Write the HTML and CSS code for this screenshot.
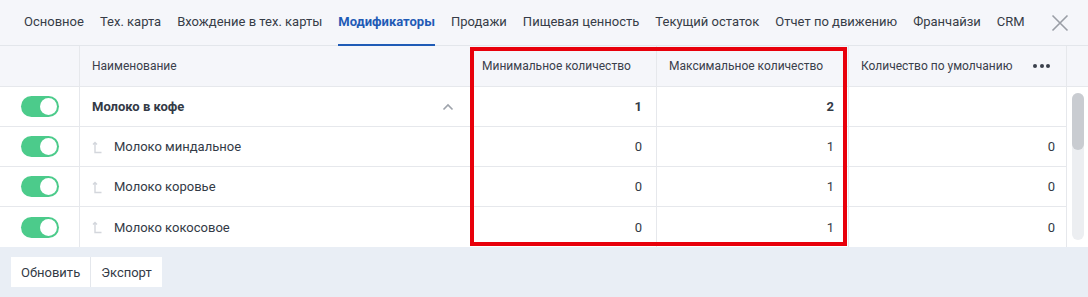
FILE: index.html
```html
<!DOCTYPE html>
<html lang="ru">
<head>
<meta charset="utf-8">
<link rel="stylesheet" href="styles.css">
</head>
<body>
<div class="page">
  <nav class="tabs">
    <span class="tab">Основное</span>
    <span class="tab">Тех. карта</span>
    <span class="tab">Вхождение в тех. карты</span>
    <span class="tab active">Модификаторы</span>
    <span class="tab">Продажи</span>
    <span class="tab">Пищевая ценность</span>
    <span class="tab">Текущий остаток</span>
    <span class="tab">Отчет по движению</span>
    <span class="tab">Франчайзи</span>
    <span class="tab">CRM</span>
    <svg class="close" width="18" height="18" viewBox="0 0 18 18"><path d="M1.5 1.5L16.5 16.5M16.5 1.5L1.5 16.5" stroke="#9a9ea6" stroke-width="1.6" fill="none"/></svg>
  </nav>
  <div class="tablewrap">
    <div class="grid">
      <div class="row head">
        <div class="c c-tog"></div>
        <div class="c c-name">Наименование</div>
        <div class="c c-min">Минимальное количество</div>
        <div class="c c-max">Максимальное количество</div>
        <div class="c c-def">Количество по умолчанию<span class="dots"><i></i><i></i><i></i></span></div>
      </div>
      <div class="row">
        <div class="c c-tog"><span class="toggle"></span></div>
        <div class="c c-name bold">Молоко в кофе<svg class="chev" width="12" height="8" viewBox="0 0 12 8"><path d="M1.5 6.5L6 2L10.5 6.5" stroke="#9ea3ab" stroke-width="1.6" fill="none"/></svg></div>
        <div class="c c-min num bold">1</div>
        <div class="c c-max num bold">2</div>
        <div class="c c-def num"></div>
      </div>
      <div class="row">
        <div class="c c-tog"><span class="toggle"></span></div>
        <div class="c c-name child"><svg class="tree" width="10" height="14" viewBox="0 0 10 14"><path d="M3 2.5V12.5H9.5M1 4.5L3 2.5L5 4.5" stroke="#d3d6dc" stroke-width="1.4" fill="none"/></svg>Молоко миндальное</div>
        <div class="c c-min num">0</div>
        <div class="c c-max num">1</div>
        <div class="c c-def num">0</div>
      </div>
      <div class="row">
        <div class="c c-tog"><span class="toggle"></span></div>
        <div class="c c-name child"><svg class="tree" width="10" height="14" viewBox="0 0 10 14"><path d="M3 2.5V12.5H9.5M1 4.5L3 2.5L5 4.5" stroke="#d3d6dc" stroke-width="1.4" fill="none"/></svg>Молоко коровье</div>
        <div class="c c-min num">0</div>
        <div class="c c-max num">1</div>
        <div class="c c-def num">0</div>
      </div>
      <div class="row last">
        <div class="c c-tog"><span class="toggle"></span></div>
        <div class="c c-name child"><svg class="tree" width="10" height="14" viewBox="0 0 10 14"><path d="M3 2.5V12.5H9.5M1 4.5L3 2.5L5 4.5" stroke="#d3d6dc" stroke-width="1.4" fill="none"/></svg>Молоко кокосовое</div>
        <div class="c c-min num">0</div>
        <div class="c c-max num">1</div>
        <div class="c c-def num">0</div>
      </div>
    </div>
    <div class="scrollcol">
      <div class="scrollhead"></div>
      <div class="track"><div class="thumb"></div></div>
    </div>
    <div class="highlight"></div>
  </div>
  <div class="footer">
    <div class="btngroup">
      <button class="btn">Обновить</button>
      <button class="btn">Экспорт</button>
    </div>
  </div>
</div>
</body>
</html>
```
FILE: styles.css
```css
* { box-sizing: border-box; }
html, body { margin: 0; padding: 0; }
body {
  font-family: Roboto, "Liberation Sans", Arial, sans-serif;
  color: #333a46;
  background: #e9eef5;
  width: 1088px;
  height: 297px;
  overflow: hidden;
}
.page { width: 1088px; }
.tabs {
  height: 46px;
  background: #f5f6fa;
  border-bottom: 1px solid #e3e6eb;
  display: flex;
  align-items: stretch;
  gap: 16px;
  padding-left: 24px;
  position: relative;
}
.tab {
  font-size: 13px;
  line-height: 44px;
  color: #363c47;
  white-space: nowrap;
  border-bottom: 2px solid transparent;
}
.tab.active {
  color: #1f5bb6;
  font-weight: 700;
  border-bottom-color: #1f5bb6;
  margin-bottom: -1px;
}
.close { margin-left: 10px; align-self: center; }
.tablewrap {
  position: relative;
  display: flex;
  background: #fff;
}
.grid { width: 1067px; border-right: 1px solid #e6e8ec; }
.row {
  display: grid;
  grid-template-columns: 80px 390px 186px 192px 219px;
  height: 40px;
  border-bottom: 1px solid #e6e8ec;
}
.row.last { border-bottom: none; }
.row.head { height: 41px; background: #f5f6fa; }
.c {
  display: flex;
  align-items: center;
  font-size: 13px;
  padding: 0 12px;
  white-space: nowrap;
}
.head .c { font-size: 12px; color: #3a404b; }
.c-tog { border-right: 1px solid #e6e8ec; justify-content: center; padding: 0; }
.c-max { border-left: 1px solid #e6e8ec; }
.c-def { border-left: 1px solid #e6e8ec; }
.num { justify-content: flex-end; padding-right: 14px; }
.c-def.num { padding-right: 12px; }
.bold { font-weight: 700; }
.c-name.bold { justify-content: space-between; padding-right: 16px; }
.child { gap: 12px; }
.tree { flex: none; }
.c-def { padding-right: 17px; }
.dots { margin-left: auto; display: flex; gap: 2.5px; }
.dots i { width: 4px; height: 4px; border-radius: 50%; background: #3a404b; }
.toggle {
  width: 38px;
  height: 21px;
  border-radius: 11px;
  background: #4ccb8b;
  position: relative;
}
.toggle::after {
  content: "";
  position: absolute;
  right: 2px;
  top: 2px;
  width: 17px;
  height: 17px;
  border-radius: 50%;
  background: #fff;
}
.scrollcol { width: 21px; display: flex; flex-direction: column; align-items: center; }
.scrollhead { height: 41px; width: 21px; background: #f5f6fa; border-bottom: 1px solid #e6e8ec; }
.track {
  width: 12px;
  margin-top: 6px;
  height: 147px;
  background: #eceef1;
  border-radius: 6px;
}
.thumb { height: 57px; background: #c9ccd1; border-radius: 6px; }
.highlight {
  position: absolute;
  left: 470px;
  top: 1px;
  width: 377px;
  height: 199px;
  border: 4px solid #e8000b;
  pointer-events: none;
}
.footer { padding: 10px 11px; }
.btngroup { display: inline-flex; background: #fff; border-radius: 2px; }
.btn {
  font-family: inherit;
  font-size: 13px;
  color: #333a46;
  background: #fff;
  border: none;
  height: 30px;
  padding: 0 10px;
}
.btn + .btn { border-left: 1px solid #e4e7ec; }
```
